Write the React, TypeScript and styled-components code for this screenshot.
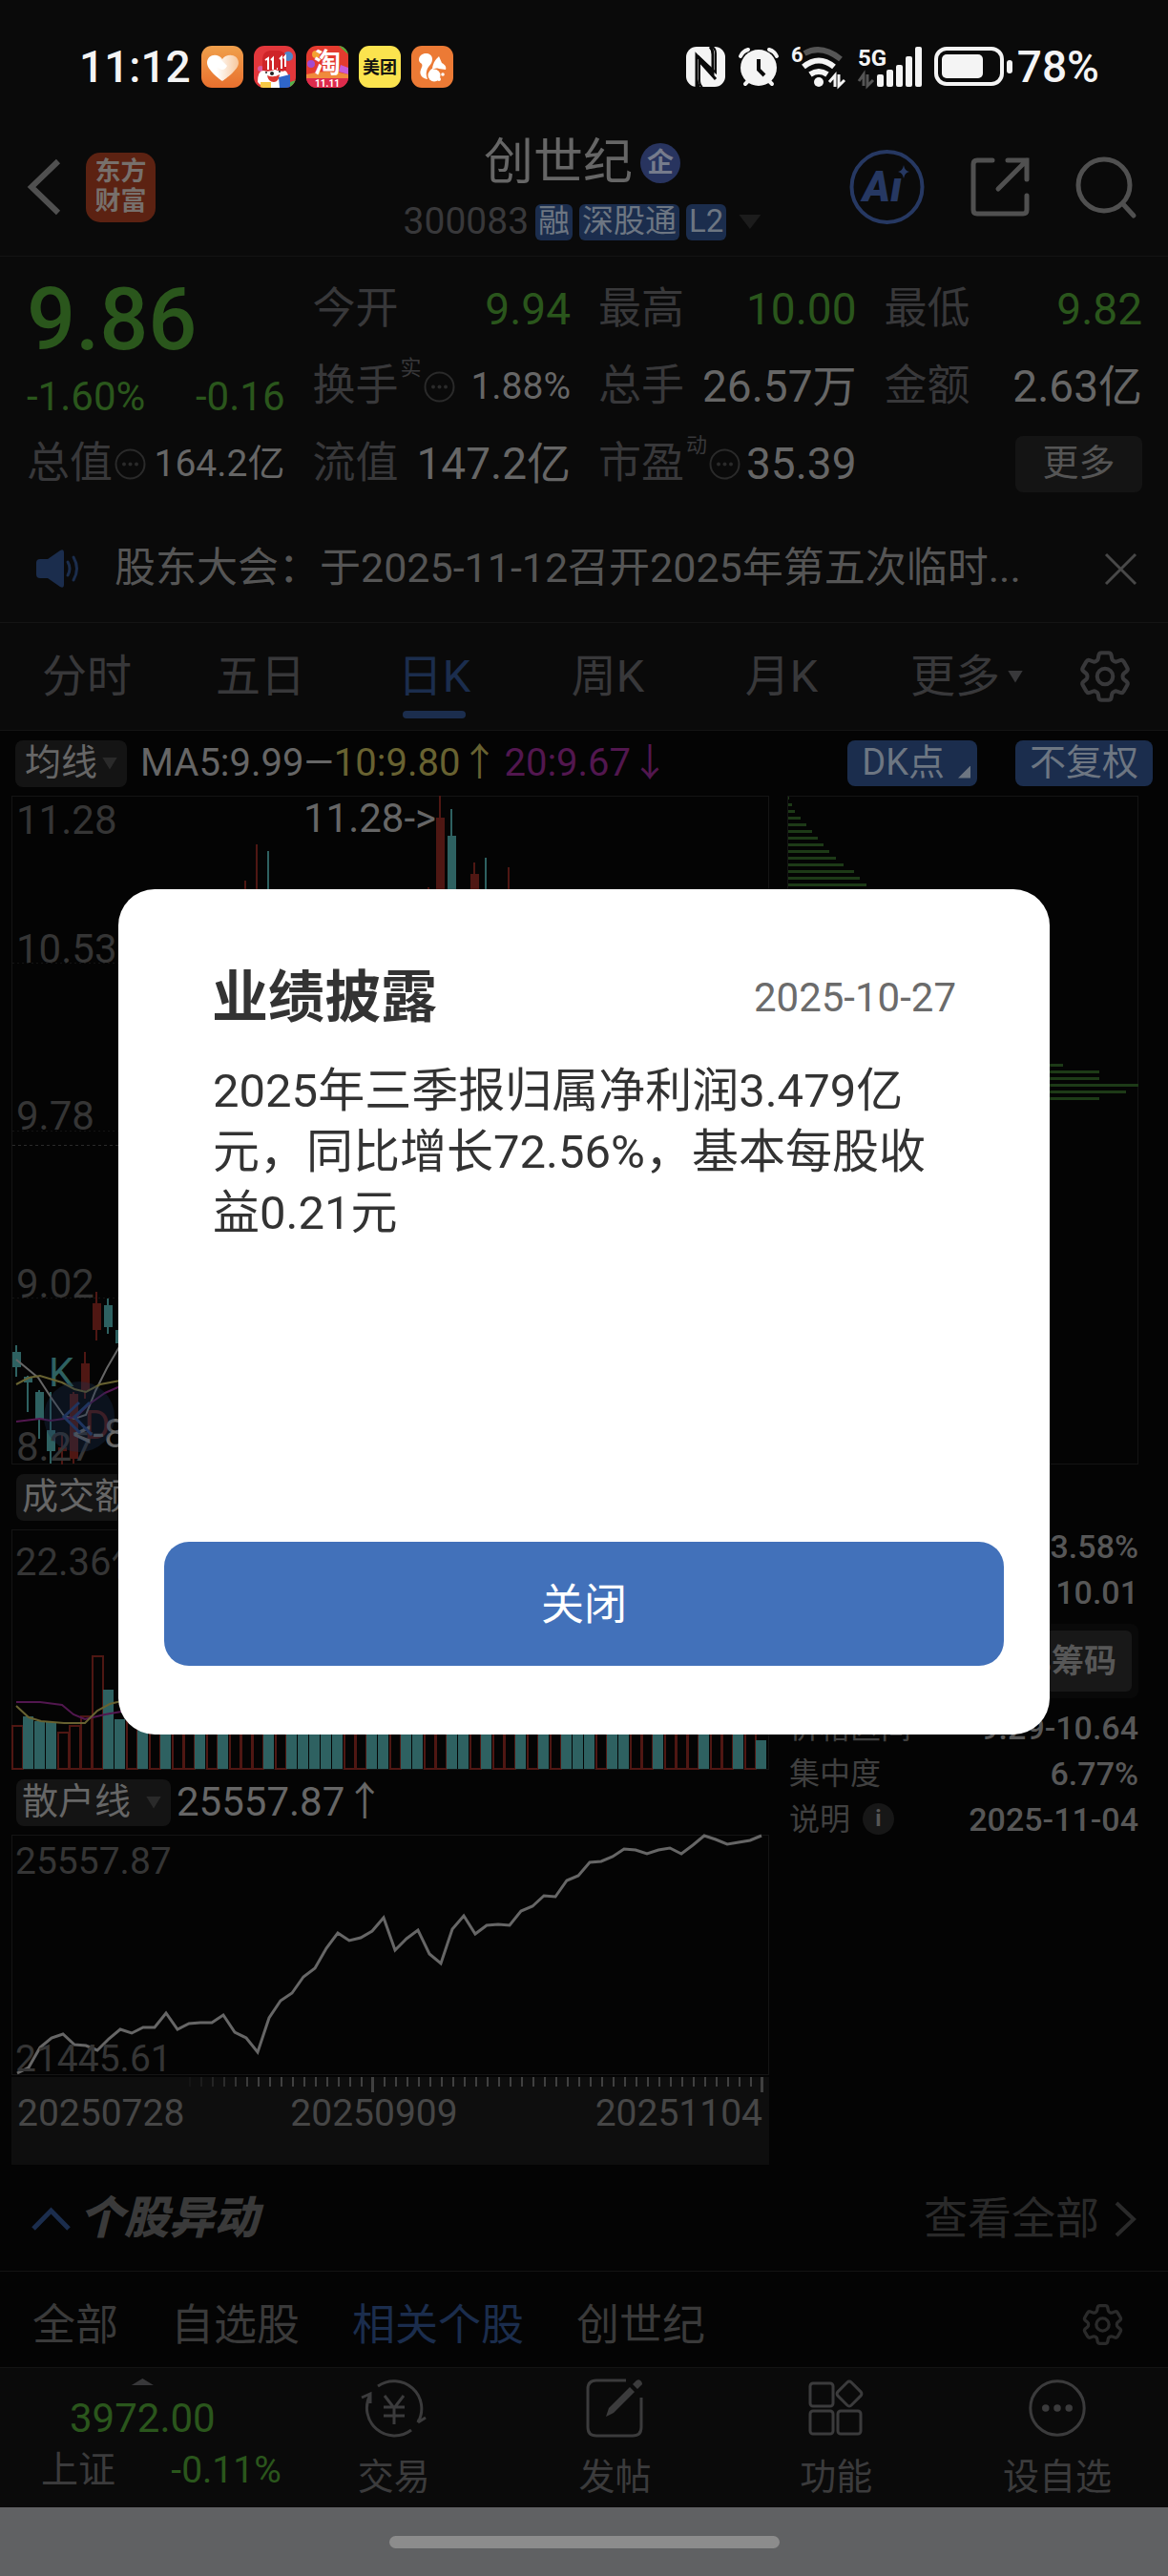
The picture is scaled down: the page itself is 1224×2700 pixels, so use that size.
import React from "react";
import styled, { createGlobalStyle } from "styled-components";
import { HiOutlineCog6Tooth } from "react-icons/hi2";

const c = {
  bg: "#0a0a0a",
  deep: "#040404",
  line: "#141414",
  chip: "#141414",
  text: "#666666",
  soft: "#555555",
  mute: "#38383a",
  faint: "#2a2a2a",
  green: "#2a561c",
  blue: "#1b2d4d",
  red: "#4f1713",
  teal: "#2e6161",
  yellow: "#686231",
  purple: "#52174f",
};

const FONT = 'Roboto, "Noto Sans CJK SC", sans-serif';

const Global = createGlobalStyle`
  * { box-sizing: border-box; }
  body { margin: 0; background: ${c.bg}; font-family: ${FONT}; line-height: 1.2; }
  h1, h2, p, dl, dd, dt { margin: 0; font-weight: 400; }
  button { font-family: inherit; line-height: inherit; border: 0; padding: 0; background: none; color: inherit; }
  a { color: inherit; text-decoration: none; }
  svg { display: block; flex: none; overflow: visible; }
`;

const Screen = styled.div`
  position: relative;
  background: ${c.bg};
  color: ${c.text};
`;

/* Status bar */
const StatusBar = styled.div`
  display: flex;
  align-items: center;
  justify-content: space-between;
  height: 124px;
  padding: 16px 72px 0 83px;
  color: #f4f4f4;
`;
const StatusSide = styled.div<{ $gap: number }>`
  display: flex;
  align-items: center;
  gap: ${(p) => p.$gap}px;
`;
const StatusText = styled.span`
  font-size: 46px;
  font-weight: 500;
  line-height: 48px;
`;

/* Header */
const Header = styled.header`
  display: grid;
  grid-template-columns: 1fr auto 1fr;
  align-items: center;
  height: 145px;
  padding: 0 33px 0 29px;
  border-bottom: 1px solid ${c.line};
`;
const HeaderLeft = styled.div`
  display: flex;
  align-items: center;
  gap: 27px;
`;
const HeaderRight = styled.div`
  display: flex;
  align-items: center;
  justify-content: flex-end;
  gap: 48px;
`;
const Logo = styled.div`
  display: grid;
  place-content: center;
  width: 73px;
  height: 73px;
  border-radius: 15px;
  background: #5c2212;
  color: #77706c;
  font-size: 27px;
  font-weight: 700;
  line-height: 31px;
  text-align: center;
`;
const TitleBlock = styled.div`
  display: flex;
  flex-direction: column;
  align-items: center;
  gap: 12px;
  padding-top: 1px;
`;
const TitleRow = styled.div`
  display: flex;
  align-items: center;
  gap: 8px;
`;
const Title = styled.h1`
  font-size: 52px;
  line-height: 60px;
`;
const Badge = styled.span`
  width: 42px;
  height: 42px;
  border-radius: 50%;
  background: #28345f;
  color: #767b8c;
  font-size: 28px;
  font-weight: 700;
  line-height: 41px;
  text-align: center;
`;
const SubRow = styled.div`
  display: flex;
  align-items: center;
  gap: 7px;
  height: 40px;
  color: ${c.mute};
  font-size: 39px;
`;
const Tag = styled.span`
  height: 38px;
  padding: 0 3px;
  border-radius: 6px;
  background: ${c.blue};
  color: #6d7682;
  font-size: 33px;
  line-height: 36px;
`;
const TagCaret = styled.span`
  width: 23px;
  height: 15px;
  margin-left: 6px;
  background: #1c1c1c;
  clip-path: polygon(0 0, 100% 0, 50% 100%);
`;
const Caret = styled.span<{ $w: number; $h: number; $up?: boolean; $color?: string }>`
  width: ${(p) => p.$w}px;
  height: ${(p) => p.$h}px;
  background: ${(p) => p.$color || c.faint};
  clip-path: ${(p) => (p.$up ? "polygon(50% 0, 100% 100%, 0 100%)" : "polygon(0 0, 100% 0, 50% 100%)")};
`;

/* Quote */
const Quote = styled.section`
  display: grid;
  grid-template-columns: repeat(4, 1fr);
  grid-auto-rows: 60px;
  gap: 21px 29px;
  padding: 25px 27px 24px 28px;
`;
const PriceCell = styled.div`
  grid-row: span 2;
  display: flex;
  flex-direction: column;
  justify-content: space-between;
  color: ${c.green};
`;
const Price = styled.strong`
  font-size: 90px;
  font-weight: 500;
  line-height: 84px;
`;
const Change = styled.div`
  display: flex;
  justify-content: space-between;
  font-size: 42px;
  line-height: 38px;
`;
const Cell = styled.div`
  display: flex;
  align-items: center;
  gap: 2px;
  white-space: nowrap;
`;
const Label = styled.span`
  color: ${c.mute};
  font-size: 45px;
  line-height: 60px;
`;
const Sup = styled.span`
  align-self: flex-start;
  color: ${c.mute};
  font-size: 22px;
  line-height: 22px;
`;
const Value = styled.span<{ $green?: boolean; $small?: boolean }>`
  margin-left: auto;
  color: ${(p) => (p.$green ? c.green : c.text)};
  font-size: ${(p) => (p.$small ? 39 : 46)}px;
  line-height: 60px;
`;
const MoreButton = styled.button`
  width: 133px;
  height: 59px;
  margin-left: auto;
  border-radius: 8px;
  background: ${c.chip};
  color: ${c.soft};
  font-size: 38px;
`;

/* Notice */
const Notice = styled.div`
  display: flex;
  align-items: center;
  height: 113px;
  padding: 0 33px 0 38px;
  border-bottom: 1px solid ${c.line};
`;
const NoticeText = styled.a`
  flex: 1;
  margin-left: 36px;
  color: ${c.soft};
  font-size: 43px;
  white-space: nowrap;
`;

/* Period tabs */
const Periods = styled.nav`
  display: grid;
  grid-template-columns: repeat(6, 1fr) 132px;
  height: 113px;
  border-bottom: 1px solid ${c.line};
`;
const Period = styled.button<{ $on?: boolean; $menu?: boolean }>`
  display: flex;
  align-items: center;
  justify-content: center;
  gap: 8px;
  padding-left: ${(p) => (p.$menu ? 24 : 0)}px;
  color: ${(p) => (p.$on ? c.blue : c.mute)};
  font-size: 47px;
`;
const PeriodName = styled.span<{ $on?: boolean }>`
  display: flex;
  flex-direction: column;
  align-items: center;
  line-height: 72px;
  &::after {
    content: "";
    width: 66px;
    height: 8px;
    margin-bottom: -8px;
    border-radius: 4px;
    background: ${(p) => (p.$on ? c.blue : "transparent")};
  }
`;
const GearButton = styled.button`
  display: grid;
  place-items: center;
  color: ${c.mute};
`;

/* Chart area */
const ChartArea = styled.main`
  background: ${c.deep};
`;
const IndicatorRow = styled.div`
  display: flex;
  align-items: center;
  height: 68px;
  padding: 0 16px;
  font-size: 40px;
  white-space: nowrap;
`;
const Chip = styled.button<{ $gap: number }>`
  display: flex;
  align-items: center;
  gap: ${(p) => p.$gap}px;
  height: 49px;
  padding: 0 10px 0 ${(p) => (p.$gap > 10 ? 6 : 10)}px;
  border-radius: 8px;
  background: ${c.chip};
  color: ${c.text};
  font-size: 38px;
`;
const Averages = styled.div`
  display: flex;
  flex: 1;
  margin-left: 14px;
`;
const Tint = styled.span<{ $color: string }>`
  color: ${(p) => p.$color};
`;
const LongAverage = styled(Tint)`
  margin-left: 6px;
`;
const BlueButton = styled.button`
  display: flex;
  align-items: center;
  gap: 14px;
  height: 48px;
  margin-left: 40px;
  padding: 0 15px;
  border-radius: 8px;
  background: ${c.blue};
  color: #6d7682;
  font-size: 38px;
`;
const Corner = styled.span`
  width: 13px;
  height: 13px;
  margin: 18px -8px 0 0;
  background: #6d7682;
  clip-path: polygon(100% 0, 100% 100%, 0 100%);
`;
const ChartGrid = styled.div`
  display: grid;
  grid-template-columns: 794fr 368fr;
  gap: 19px;
  padding: 0 31px 0 12px;
`;
const Plot = styled.svg`
  width: 100%;
  height: auto;
  font-family: ${FONT};
`;
const PlotTitle = styled.div`
  display: flex;
  align-items: center;
  gap: 6px;
  height: 68px;
  padding-left: 5px;
  font-size: 42px;
`;
const Axis = styled.div`
  height: 92px;
  margin-top: 2px;
  background: #0e0e0e;
`;
const AxisDates = styled.div`
  display: grid;
  grid-template-columns: 286fr 319fr auto;
  padding: 2px 7px 0 6px;
  color: #464646;
  font-size: 39px;
  line-height: 40px;
`;
const Stats = styled.dl`
  margin-top: 62px;
`;
const Stat = styled.div`
  display: flex;
  align-items: center;
  height: 48px;
`;
const StatName = styled.dt`
  display: flex;
  align-items: center;
  gap: 13px;
  padding-left: 2px;
  color: #404040;
  font-size: 32px;
`;
const StatValue = styled.dd`
  margin-left: auto;
  color: #575757;
  font-size: 34px;
  font-weight: 500;
`;
const Info = styled.span`
  width: 33px;
  height: 33px;
  border-radius: 50%;
  background: #171717;
  color: #555555;
  font-size: 24px;
  font-weight: 700;
  line-height: 32px;
  text-align: center;
`;
const Segments = styled.div`
  display: flex;
  height: 78px;
  margin: 9px 0 7px;
  padding: 7px;
  border-radius: 8px;
  background: #090909;
`;
const Segment = styled.button<{ $on?: boolean }>`
  flex: 1;
  padding-right: 16px;
  border-radius: 6px;
  background: ${(p) => (p.$on ? "#181818" : "transparent")};
  color: #575757;
  font-size: 34px;
  font-weight: 700;
  text-align: right;
`;

/* Unusual moves */
const Moves = styled.section`
  display: flex;
  align-items: center;
  height: 112px;
  padding: 2px 33px 0;
  border-bottom: 1px solid ${c.line};
`;
const MovesTitle = styled.h2`
  flex: 1;
  margin-left: 9px;
  color: #3a3a3a;
  font-size: 47px;
  font-weight: 900;
  font-style: italic;
`;
const AllLink = styled.a`
  display: flex;
  align-items: center;
  gap: 16px;
  color: ${c.faint};
  font-size: 46px;
`;
const Filters = styled.nav`
  display: flex;
  align-items: center;
  gap: 55px;
  height: 100px;
  padding-left: 34px;
`;
const Filter = styled.button<{ $on?: boolean }>`
  padding-top: 14px;
  color: ${(p) => (p.$on ? c.blue : "#3a3a3a")};
  font-size: 45px;
`;
const FilterGear = styled.button`
  margin: 10px 42px 0 auto;
  color: ${c.faint};
`;

/* Bottom navigation */
const BottomNav = styled.nav`
  display: grid;
  grid-template-columns: 297fr repeat(4, 232fr);
  height: 147px;
  border-top: 1px solid ${c.line};
`;
const IndexCell = styled.a`
  display: flex;
  flex-direction: column;
  align-items: center;
  gap: 10px;
  padding: 11px 2px 0 43px;
  color: ${c.green};
  font-size: 42px;
  line-height: 48px;
`;
const IndexTop = styled.span`
  display: flex;
  flex-direction: column;
  align-items: center;
  align-self: flex-start;
  gap: 11px;
  padding-left: 30px;
`;
const IndexRow = styled.span`
  display: flex;
  align-self: stretch;
  justify-content: space-between;
  font-size: 39px;
  line-height: 40px;
`;
const NavItem = styled.button`
  display: flex;
  flex-direction: column;
  align-items: center;
  gap: 19px;
  padding-top: 11px;
  color: #3b3b3c;
  font-size: 38px;
  line-height: 44px;
`;
const HomeBar = styled.div`
  display: grid;
  place-items: center;
  height: 72px;
  background: #606163;
`;
const HomePill = styled.div`
  width: 409px;
  height: 13px;
  border-radius: 7px;
  background: #8c8c8c;
`;

/* Dialog */
const Overlay = styled.div`
  position: absolute;
  inset: 0;
  display: flex;
  align-items: center;
  justify-content: center;
  padding: 50px 124px 0;
`;
const Dialog = styled.div`
  display: flex;
  flex-direction: column;
  width: 100%;
  height: 886px;
  padding: 82px 48px 72px;
  border-radius: 38px;
  background: #ffffff;
  color: #333333;
`;
const DialogHead = styled.div`
  display: flex;
  align-items: center;
  justify-content: space-between;
  padding: 0 50px;
`;
const DialogTitle = styled.h2`
  font-size: 59px;
  font-weight: 700;
  line-height: 64px;
`;
const DialogDate = styled.time`
  color: #6b6b6b;
  font-size: 42px;
`;
const DialogText = styled.p`
  flex: 1;
  padding: 34px 66px 0 51px;
  font-size: 49px;
  line-height: 64px;
`;
const CloseButton = styled.button`
  height: 130px;
  padding-top: 4px;
  border-radius: 26px;
  background: #4271ba;
  color: #ffffff;
  font-size: 45px;
`;

const DotsCircle = ({ size = 33, color = c.faint }) => (
  <svg width={size} height={size} viewBox="0 0 33 33" fill="none" stroke={color} strokeWidth={size > 40 ? 1.6 : 2}>
    <circle cx="16.5" cy="16.5" r="15" />
    <g fill={color} stroke="none">
      <circle cx="10" cy="16.5" r="2" />
      <circle cx="16.5" cy="16.5" r="2" />
      <circle cx="23" cy="16.5" r="2" />
    </g>
  </svg>
);

const AppIcons = () => (
  <>
    <svg width="44" height="44" viewBox="0 0 44 44">
      <defs>
        <linearGradient id="heartBg" x1="0" y1="0" x2="0" y2="1">
          <stop offset="0" stopColor="#f0a04c" />
          <stop offset="1" stopColor="#e8702e" />
        </linearGradient>
        <linearGradient id="heart" x1="0" y1="0" x2="1" y2="0">
          <stop offset="0.3" stopColor="#fff" />
          <stop offset="1" stopColor="#f7c79c" />
        </linearGradient>
      </defs>
      <rect width="44" height="44" rx="11" fill="url(#heartBg)" />
      <path d="M22 37C19 35 6 25 6 18c0-9 11-11 16-4 5-7 17-5 17 4 0 7-14 17-17 19z" fill="url(#heart)" />
      <path d="M11 15q5-5 10 0l6 6q-3 6-8 3l-8-6z" fill="#fff" />
    </svg>
    <svg width="44" height="44" viewBox="0 0 44 44">
      <clipPath id="r11"><rect width="44" height="44" rx="11" /></clipPath>
      <g clipPath="url(#r11)">
        <rect width="44" height="44" fill="#e2373b" />
        <circle cx="36" cy="11" r="5" fill="#4f86c8" />
        <circle cx="7" cy="24" r="3" fill="#d85aa0" />
        <path d="M9 30V14q0-8 8-9h9q8 1 8 9v16z" fill="#cf2428" />
        <path d="M12 15l3-2v12M18 15l2-2v12M24 24h1M27 14l2-2v12M31 13l2-2v11" fill="none" stroke="#fff" strokeWidth="2" />
        <path d="M4 38q0-12 6-12 5 2 12-1 8 3 11 1 5 4 4 14l-8 4H10z" fill="#fff" />
        <path d="M14 31q7 3 13-1-1 8-6 8-6 0-7-7z" fill="#d9362f" />
        <circle cx="19" cy="29" r="2" fill="#222" />
        <circle cx="13" cy="28" r="1" fill="#222" />
        <circle cx="27" cy="27" r="1" fill="#222" />
        <path d="M7 38h11v6H7z" fill="#f6c945" />
        <path d="M26 33l12-3v14H27z" fill="#2f66c9" />
        <path d="M38 38l6-2v8h-6z" fill="#56b04b" />
      </g>
    </svg>
    <svg width="44" height="44" viewBox="0 0 44 44" fontFamily={FONT} fontWeight="700" textAnchor="middle" fill="#fff">
      <g clipPath="url(#r11)">
        <rect width="44" height="44" fill="#e43b2f" />
        <path d="M34 0h10v9z" fill="#4fae3c" />
        <circle cx="10" cy="9" r="4" fill="#f3a331" />
        <circle cx="5" cy="19" r="4" fill="#a34bd0" />
        <path d="M36 20l8 3v7l-10-3z" fill="#c85bd8" />
        <path d="M0 30q22-6 44 0v5H0z" fill="#f08a3c" />
        <path d="M0 34h44v10H0z" fill="#dd2b4c" />
      </g>
      <text x="22" y="28" fontSize="28">淘</text>
      <text x="22" y="43" fontSize="10">11.11</text>
    </svg>
    <svg width="44" height="44" viewBox="0 0 44 44">
      <rect width="44" height="44" rx="11" fill="#fbe34e" />
      <text x="22" y="29" fontFamily={FONT} fontSize="18" fontWeight="700" textAnchor="middle" fill="#111">美团</text>
    </svg>
    <svg width="44" height="44" viewBox="0 0 44 44">
      <rect width="44" height="44" rx="11" fill="#ec7a35" />
      <path d="M8 15c0-9 14-9 14-1 0 6-5 7-6 13-1 4 1 7 1 8-6-1-9-5-7-10 1-3 2-4 1-6-1-1-3-2-3-4z" fill="#fff" />
      <path d="M22 24c1-7 4-10 7-13l3 7c4 2 5 5 4 7l-7-1c-6-2-10 4-9 9-3-3-1-8 2-9z" fill="#fff" />
      <circle cx="24" cy="31" r="6.5" fill="#fff" />
      <circle cx="33" cy="30" r="1.8" fill="#fff" />
      <circle cx="29" cy="35" r="2" fill="#fff" />
    </svg>
  </>
);

const SystemIcons = () => (
  <>
    <svg width="42" height="42" viewBox="0 0 42 42">
      <rect width="41" height="42" rx="11" fill="#f4f4f4" />
      <path d="M27 0q4 2 4 7v20L14 11v24q0 5 3 7" fill="none" stroke="#0a0a0a" strokeWidth="2" />
      <path d="M11 42V9l17 18V8q0-5-3-8M14 42q-3-3-3-8M31 34L14 15" fill="none" stroke="#0a0a0a" strokeWidth="3" />
    </svg>
    <svg width="42" height="42" viewBox="0 0 42 42">
      <g stroke="#f4f4f4" strokeWidth="4" strokeLinecap="round" fill="none">
        <path d="M2 10Q4 5 10 3M40 10Q38 5 32 3M7 39l5-5M35 39l-5-5" />
      </g>
      <circle cx="21" cy="22" r="19" fill="#f4f4f4" />
      <path d="M21 13v11l6 6" fill="none" stroke="#0a0a0a" strokeWidth="4" />
    </svg>
    <svg width="57" height="44" viewBox="0 0 57 44" fill="none" stroke="#f4f4f4" strokeWidth="6">
      <path d="M14 8q18-10 38 6" stroke="#555" />
      <path d="M13 22q16-13 32 0M20 30q9-6 18 0" />
      <circle cx="29" cy="38" r="5" fill="#f4f4f4" stroke="none" />
      <path d="M40 38l6-7v12M50 30v12l6-6" strokeWidth="3" />
      <text x="0" y="17" fontFamily={FONT} fontSize="22" fontWeight="700" fill="#f4f4f4" stroke="none">6</text>
    </svg>
    <svg width="67" height="42" viewBox="0 0 67 42" fill="#f4f4f4">
      <text x="0" y="20" fontFamily={FONT} fontSize="24" fontWeight="700">5G</text>
      <path d="M1 36l5-7v12M10 29v12l6-6" fill="none" stroke="#555" strokeWidth="3" />
      <rect x="20" y="29" width="7" height="13" rx="2" />
      <rect x="30" y="24" width="7" height="18" rx="2" />
      <rect x="40" y="19" width="7" height="23" rx="2" />
      <rect x="50" y="10" width="7" height="32" rx="2" />
      <rect x="60" y="0" width="7" height="42" rx="2" />
    </svg>
  </>
);

const Battery = () => (
  <svg width="83" height="42" viewBox="0 0 83 42">
    <rect x="2" y="2" width="69" height="37" rx="11" fill="none" stroke="#f4f4f4" strokeWidth="4" />
    <rect x="8" y="8" width="43" height="25" rx="5" fill="#f4f4f4" />
    <rect x="76" y="14" width="6" height="14" rx="3" fill="#f4f4f4" />
  </svg>
);

type Candle = [x: number, up: boolean, wickTop: number, wickBottom: number, bodyTop: number, bodyBottom: number];
const candles: Candle[] = [
  [17, false, 1410, 1443, 1417, 1433], [29, false, 1442, 1480, 1443, 1449], [41, false, 1457, 1508, 1459, 1487],
  [53, false, 1459, 1534, 1499, 1521], [65, true, 1504, 1535, 1517, 1521], [77, true, 1459, 1534, 1461, 1529],
  [89, true, 1417, 1466, 1429, 1457], [101, true, 1354, 1405, 1366, 1394], [113, false, 1361, 1398, 1368, 1391],
  [125, false, 1380, 1412, 1394, 1408], [257, true, 923, 1000, 960, 990], [269, true, 885, 1000, 950, 990],
  [281, false, 892, 1000, 950, 990], [449, true, 930, 1000, 950, 990], [461, true, 834, 1000, 857, 990],
  [473, false, 848, 1000, 876, 990], [497, true, 904, 1000, 916, 990], [509, false, 899, 1000, 950, 990],
  [533, true, 909, 1000, 950, 990],
];

const volumePattern = "RTTTRRRRTTRTRTRRTRTRRRTRTTTTTRRTTRTTRRTTRTRRTRTRTTTRTTRRTRRRTRRTRT";
const volumeTops: Record<number, number> = { 0: 205, 1: 196, 2: 201, 3: 202, 4: 212, 5: 205, 6: 195, 7: 132, 8: 168, 9: 199, 65: 221 };

const retail = [
  250, 244, 223, 213, 209, 220, 221, 226, 214, 204, 208, 202, 202, 187, 204, 198, 197, 197, 189, 207, 213, 228, 192,
  174, 166, 149, 140, 119, 103, 111, 108, 101, 87, 121, 109, 100, 125, 135, 99, 85, 104, 95, 94, 95, 80, 75, 64, 65,
  48, 43, 29, 28, 23, 15, 16, 20, 16, 14, 20, 11, 1, 5, 10, 8, 6, 1,
];

const chipsTop = [1, 4, 7, 13, 19, 25, 31, 37, 43, 50, 58, 69, 75, 82];
const chipsMid = [288, 326, 326, 367, 354, 326];

const PriceChart = () => (
  <Plot viewBox="12 834 794 701">
    <rect x="12.5" y="834.5" width="793" height="700" fill="none" stroke={c.line} />
    <g stroke={c.line} strokeDasharray="2 3">
      <path d="M13 1009.5H805M13 1185.5H805M13 1360.5H805" />
      <path d="M13 1200.5H805" stroke="#2a2a2a" strokeDasharray="3 3" />
    </g>
    {candles.map(([x, up, wt, wb, bt, bb]) => (
      <g key={x} fill={up ? c.red : c.teal}>
        <rect x={x - 1} y={wt} width="2" height={wb - wt} />
        <rect x={x - 4} y={bt} width="9" height={bb - bt} />
      </g>
    ))}
    <g fontSize="42">
      <g fill="#353535">
        <text x="17" y="874">11.28</text>
        <text x="17" y="1009">10.53</text>
        <text x="17" y="1184">9.78</text>
        <text x="17" y="1360">9.02</text>
        <text x="17" y="1531">8.27</text>
      </g>
      <text x="457" y="872" textAnchor="end" fill={c.text}>11.28-&gt;</text>
      <text x="51" y="1453" fill={c.teal}>K</text>
      <text x="88" y="1508" fill={c.red}>D</text>
      <text x="76" y="1517" fill={c.text}>&lt;-8.27</text>
    </g>
    <g fill="none" strokeWidth="2">
      <path d="M17 1425L40 1444L53 1464L67 1484L78 1487L90 1483L100 1458L112 1434L126 1410" stroke={c.text} />
      <path d="M17 1451L30 1444L42 1442L65 1449L78 1456L90 1459L105 1451L126 1447" stroke={c.yellow} />
      <path d="M17 1490L42 1487L53 1489L67 1487L80 1485L93 1472L110 1460L126 1453" stroke={c.purple} />
    </g>
    <circle cx="83" cy="1485" r="37" fill="#1b2d4d" fillOpacity="0.35" />
    <path d="M83 1470L67 1485L84 1502M94 1470L78 1485L96 1504" fill="none" stroke="#1f3560" strokeWidth="3" />
  </Plot>
);

const VolumeChart = () => (
  <Plot viewBox="12 0 794 252">
    <rect x="12.5" y="0.5" width="793" height="251" fill="none" stroke={c.line} />
    {volumePattern.split("").map((k, i) => {
      const top = volumeTops[i] ?? 197;
      return k === "T" ? (
        <rect key={i} x={12 + i * 12} y={top} width="11" height={251 - top} fill={c.teal} />
      ) : (
        <rect key={i} x={13 + i * 12} y={top + 1} width="11" height={250 - top} fill="none" stroke={c.red} strokeWidth="2" />
      );
    })}
    <text x="16" y="48" fontSize="40" fill="#353535">22.36亿</text>
    <g fill="none" strokeWidth="2">
      <path d="M17 181L42 181L65 184L77 194L89 199L110 194L127 191" stroke={c.purple} />
      <path d="M17 185L30 197L43 201L67 203L89 203L102 190L115 183L127 180" stroke={c.yellow} />
    </g>
  </Plot>
);

const RetailChart = () => (
  <Plot viewBox="12 0 794 252">
    <rect x="12.5" y="0.5" width="793" height="251" fill="none" stroke={c.line} />
    <polyline
      points={retail.map((y, i) => `${18 + i * 12},${y}`).join(" ")}
      fill="none"
      stroke={c.text}
      strokeWidth="3"
    />
    <g fontSize="39" fill="#353535">
      <text x="16" y="41">25557.87</text>
      <text x="16" y="248">21445.61</text>
    </g>
  </Plot>
);

const AxisTicks = () => (
  <Plot viewBox="12 0 794 16">
    {Array.from({ length: 51 }, (_, i) => {
      const major = i === 16 || i === 50;
      return (
        <rect
          key={i}
          x={major ? 197 + i * 12 : 198 + i * 12}
          y="0"
          width={major ? 3 : 2}
          height={major ? 16 : 10}
          fill="#404040"
          fillOpacity={Math.min(1, 0.15 + i * 0.15)}
        />
      );
    })}
  </Plot>
);

const ChipsChart = () => (
  <Plot viewBox="825 834 368 701">
    <rect x="825.5" y="834.5" width="367" height="700" fill="none" stroke={c.line} />
    <g fill="#1d3a17">
      {chipsTop.map((w, i) => (
        <rect key={i} x="826" y={835 + i * 7} width={w} height="3" />
      ))}
      {chipsMid.map((w, i) => (
        <rect key={i} x="826" y={1115 + i * 7} width={w} height="3" />
      ))}
    </g>
  </Plot>
);

export default function App() {
  return (
    <Screen>
      <Global />
      <StatusBar>
        <StatusSide $gap={11}>
          <StatusText>11:12</StatusText>
          <AppIcons />
        </StatusSide>
        <StatusSide $gap={13}>
          <SystemIcons />
          <StatusSide $gap={4}>
            <Battery />
            <StatusText>78%</StatusText>
          </StatusSide>
        </StatusSide>
      </StatusBar>

      <Header>
        <HeaderLeft>
          <button aria-label="返回">
            <svg width="34" height="60" viewBox="0 0 34 60" fill="none" stroke="#505050" strokeWidth="6">
              <path d="M32 3L4 30L32 57" />
            </svg>
          </button>
          <Logo>
            <span>东方</span>
            <span>财富</span>
          </Logo>
        </HeaderLeft>
        <TitleBlock>
          <TitleRow>
            <Title>创世纪</Title>
            <Badge>企</Badge>
          </TitleRow>
          <SubRow>
            300083
            <Tag>融</Tag>
            <Tag>深股通</Tag>
            <Tag>L2</Tag>
            <TagCaret />
          </SubRow>
        </TitleBlock>
        <HeaderRight>
          <button aria-label="智能助手">
            <svg width="79" height="80" viewBox="0 0 79 80">
              <circle cx="39.5" cy="40" r="37" fill="none" stroke="#263862" strokeWidth="4" />
              <text x="14" y="55" fontFamily={FONT} fontSize="44" fontWeight="900" fontStyle="italic" fill="#263862">Aı</text>
              <path d="M57 17q1 6 6 7-5 1-6 7-1-6-6-7 5-1 6-7z" fill="#263862" />
            </svg>
          </button>
          <button aria-label="分享">
            <svg width="62" height="62" viewBox="0 0 62 62" fill="none" stroke="#505050" strokeWidth="5" strokeLinecap="round">
              <path d="M23 3H7Q3 3 3 7v48q0 4 4 4h48q4 0 4-4V40M39 3h20v20M59 3L29 33" />
            </svg>
          </button>
          <button aria-label="搜索">
            <svg width="64" height="64" viewBox="0 0 64 64" fill="none" stroke="#505050" strokeWidth="5" strokeLinecap="round">
              <circle cx="30" cy="30" r="27" />
              <path d="M50 50l11 12" />
            </svg>
          </button>
        </HeaderRight>
      </Header>

      <Quote>
        <PriceCell>
          <Price>9.86</Price>
          <Change>
            <span>-1.60%</span>
            <span>-0.16</span>
          </Change>
        </PriceCell>
        <Cell><Label>今开</Label><Value $green>9.94</Value></Cell>
        <Cell><Label>最高</Label><Value $green>10.00</Value></Cell>
        <Cell><Label>最低</Label><Value $green>9.82</Value></Cell>
        <Cell><Label>换手</Label><Sup>实</Sup><DotsCircle /><Value $small>1.88%</Value></Cell>
        <Cell><Label>总手</Label><Value>26.57万</Value></Cell>
        <Cell><Label>金额</Label><Value>2.63亿</Value></Cell>
        <Cell><Label>总值</Label><DotsCircle /><Value $small>164.2亿</Value></Cell>
        <Cell><Label>流值</Label><Value>147.2亿</Value></Cell>
        <Cell><Label>市盈</Label><Sup>动</Sup><DotsCircle /><Value>35.39</Value></Cell>
        <Cell><MoreButton>更多</MoreButton></Cell>
      </Quote>

      <Notice>
        <svg width="46" height="40" viewBox="0 0 46 40" fill={c.blue}>
          <path d="M4 10h8L25 1q4-2 4 2v34q0 4-4 2l-13-9H4q-4 0-4-4V14q0-4 4-4z" />
          <path d="M33 13q4 7 0 14M39 8q7 12 0 24" fill="none" stroke={c.blue} strokeWidth="3" strokeLinecap="round" />
        </svg>
        <NoticeText href="#">股东大会：于2025-11-12召开2025年第五次临时...</NoticeText>
        <button aria-label="关闭公告">
          <svg width="33" height="33" viewBox="0 0 33 33" stroke="#484848" strokeWidth="3">
            <path d="M1 1l31 31M32 1L1 32" />
          </svg>
        </button>
      </Notice>

      <Periods>
        {["分时", "五日", "日K", "周K", "月K", "更多"].map((name) => (
          <Period key={name} $on={name === "日K"} $menu={name === "更多"}>
            <PeriodName $on={name === "日K"}>{name}</PeriodName>
            {name === "更多" && <Caret $w={16} $h={13} $color={c.mute} />}
          </Period>
        ))}
        <GearButton aria-label="设置">
          <HiOutlineCog6Tooth size={66} />
        </GearButton>
      </Periods>

      <ChartArea>
        <IndicatorRow>
          <Chip $gap={5}>均线<Caret $w={16} $h={13} /></Chip>
          <Averages>
            <span>MA5:9.99—</span>
            <Tint $color={c.yellow}>10:9.80↑</Tint>
            <LongAverage $color={c.purple}>20:9.67↓</LongAverage>
          </Averages>
          <BlueButton>DK点<Corner /></BlueButton>
          <BlueButton>不复权</BlueButton>
        </IndicatorRow>

        <ChartGrid>
          <div>
            <PriceChart />
            <PlotTitle><Chip $gap={16}>成交额<Caret $w={16} $h={13} /></Chip></PlotTitle>
            <VolumeChart />
            <PlotTitle><Chip $gap={16}>散户线<Caret $w={16} $h={13} /></Chip>25557.87↑</PlotTitle>
            <RetailChart />
            <Axis>
              <AxisTicks />
              <AxisDates>
                <span>20250728</span>
                <span>20250909</span>
                <span>20251104</span>
              </AxisDates>
            </Axis>
          </div>
          <div>
            <ChipsChart />
            <Stats>
              <Stat><StatName>获利比例</StatName><StatValue>33.58%</StatValue></Stat>
              <Stat><StatName>平均成本</StatName><StatValue>10.01</StatValue></Stat>
              <Segments>
                <Segment>90%筹码</Segment>
                <Segment $on>70%筹码</Segment>
              </Segments>
              <Stat><StatName>价格区间</StatName><StatValue>9.29-10.64</StatValue></Stat>
              <Stat><StatName>集中度</StatName><StatValue>6.77%</StatValue></Stat>
              <Stat><StatName>说明<Info>i</Info></StatName><StatValue>2025-11-04</StatValue></Stat>
            </Stats>
          </div>
        </ChartGrid>

        <Moves>
          <svg width="41" height="25" viewBox="0 0 41 25" fill="none" stroke={c.blue} strokeWidth="5">
            <path d="M2 23L20.5 4L39 23" />
          </svg>
          <MovesTitle>个股异动</MovesTitle>
          <AllLink href="#">
            查看全部
            <svg width="23" height="38" viewBox="0 0 23 38" fill="none" stroke={c.faint} strokeWidth="4">
              <path d="M2 2L20 19L2 36" />
            </svg>
          </AllLink>
        </Moves>
        <Filters>
          <Filter>全部</Filter>
          <Filter>自选股</Filter>
          <Filter $on>相关个股</Filter>
          <Filter>创世纪</Filter>
          <FilterGear aria-label="筛选设置"><HiOutlineCog6Tooth size={53} /></FilterGear>
        </Filters>
      </ChartArea>

      <BottomNav>
        <IndexCell href="#">
          <IndexTop>
            <Caret $w={23} $h={7} $up $color={c.mute} />
            <span>3972.00</span>
          </IndexTop>
          <IndexRow><Tint $color="#3b3b3c">上证</Tint><span>-0.11%</span></IndexRow>
        </IndexCell>
        <NavItem>
          <svg width="72" height="62" viewBox="0 0 72 62" fill="none" stroke="currentColor" strokeWidth="3">
            <path d="M19 8A29 29 0 0 1 61 46l1-3M61 46l8-5M54 54A29 29 0 0 1 11 17M2 20l9-4v10" />
            <path d="M26 18l10 13 10-13M36 31v17M25 30h22M25 39h22" />
          </svg>
          交易
        </NavItem>
        <NavItem>
          <svg width="60" height="62" viewBox="0 0 60 62" fill="none" stroke="currentColor" strokeWidth="3">
            <path d="M42 2H11Q2 2 2 11v40q0 9 9 9h38q9 0 9-9V20" />
            <path d="M21 40l3-9L46 9l5 5-22 22zM49 6l4-4q3-2 5 1t0 4l-4 4z" fill="currentColor" stroke="none" />
          </svg>
          发帖
        </NavItem>
        <NavItem>
          <svg width="58" height="62" viewBox="0 0 58 62" fill="none" stroke="currentColor" strokeWidth="3">
            <rect x="2" y="5" width="24" height="24" rx="3" />
            <rect x="2" y="34" width="24" height="24" rx="3" />
            <rect x="31" y="34" width="24" height="24" rx="3" />
            <rect x="33" y="6" width="20" height="20" rx="3" transform="rotate(45 43 16)" />
          </svg>
          功能
        </NavItem>
        <NavItem>
          <DotsCircle size={62} color="currentColor" />
          设自选
        </NavItem>
      </BottomNav>
      <HomeBar><HomePill /></HomeBar>

      <Overlay>
        <Dialog role="dialog" aria-labelledby="dialog-title">
          <DialogHead>
            <DialogTitle id="dialog-title">业绩披露</DialogTitle>
            <DialogDate>2025-10-27</DialogDate>
          </DialogHead>
          <DialogText>2025年三季报归属净利润3.479亿元，同比增长72.56%，基本每股收益0.21元</DialogText>
          <CloseButton>关闭</CloseButton>
        </Dialog>
      </Overlay>
    </Screen>
  );
}
